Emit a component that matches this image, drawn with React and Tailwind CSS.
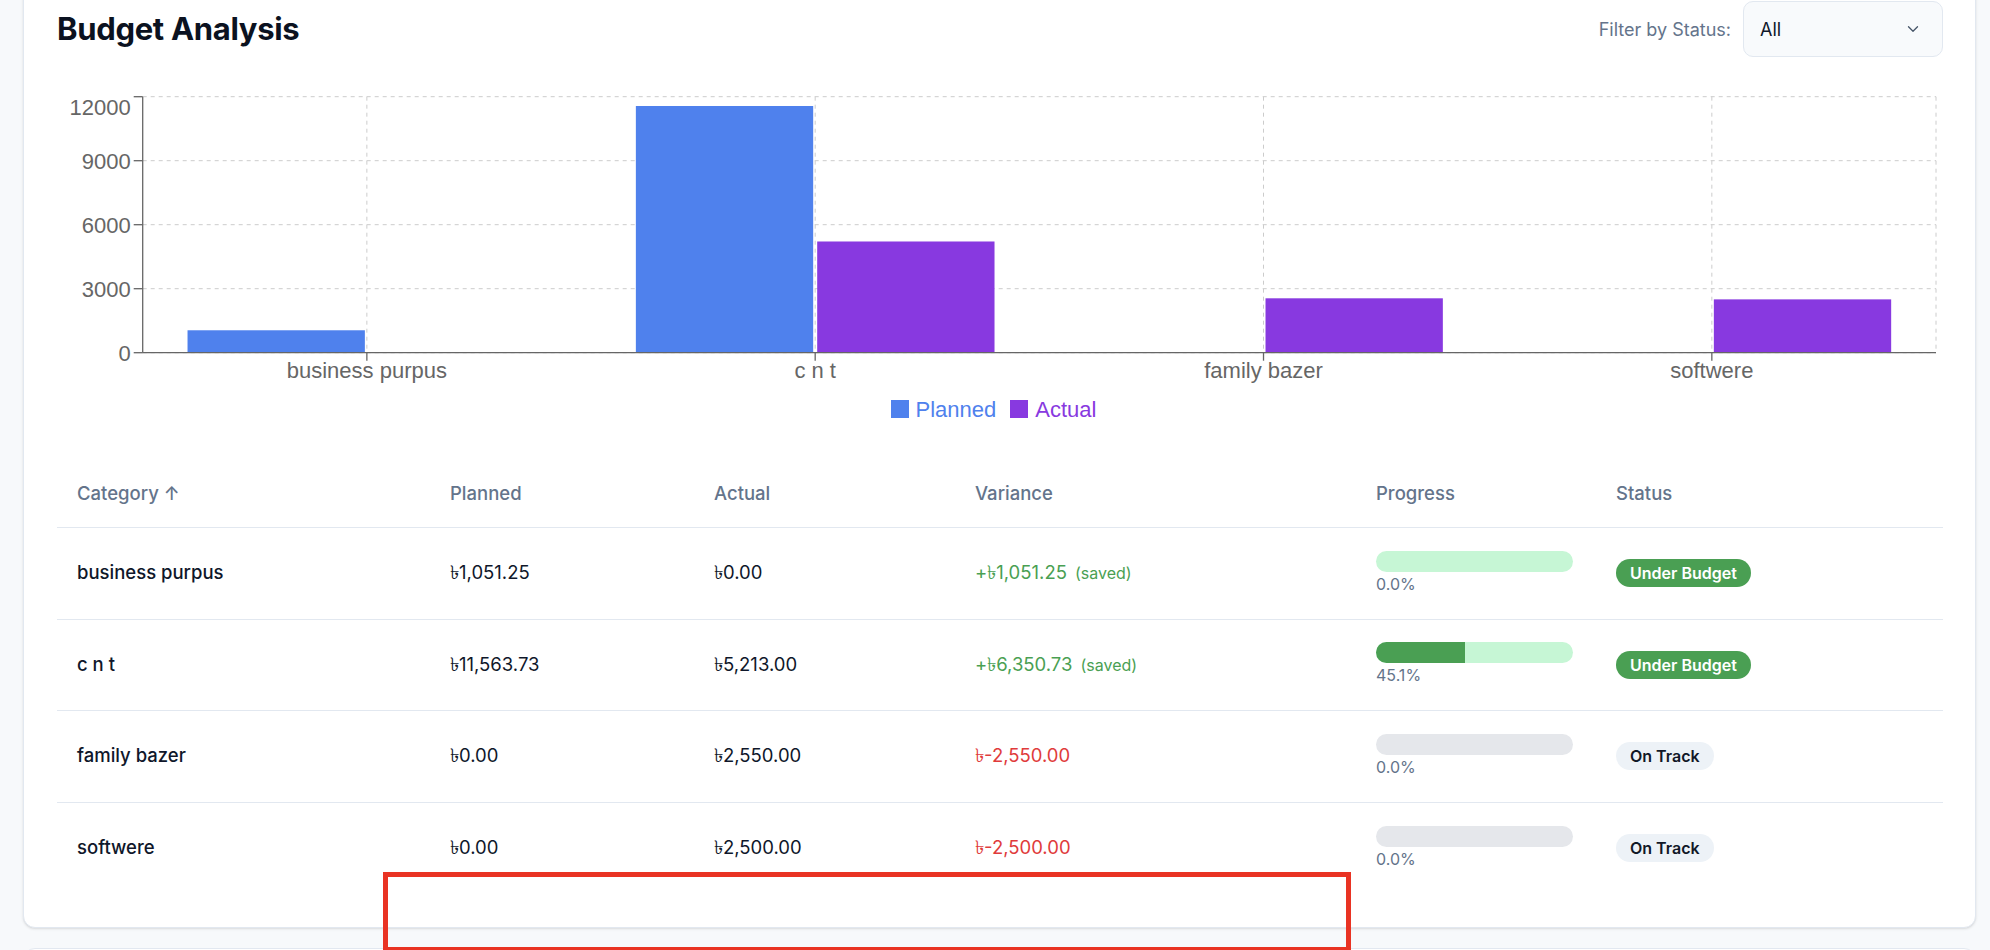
import { ChevronDown } from 'lucide-react'

const rows = [
  { name: 'business purpus', planned: 1051.25, actual: 0, variance: '+৳1,051.25', saved: true, pct: 0, status: 'Under Budget' },
  { name: 'c n t', planned: 11563.73, actual: 5213, variance: '+৳6,350.73', saved: true, pct: 45.1, status: 'Under Budget' },
  { name: 'family bazer', planned: 0, actual: 2550, variance: '৳-2,550.00', saved: false, pct: 0, status: 'On Track' },
  { name: 'softwere', planned: 0, actual: 2500, variance: '৳-2,500.00', saved: false, pct: 0, status: 'On Track' },
]

const fmt = (n) => '৳' + n.toLocaleString('en-US', { minimumFractionDigits: 2, maximumFractionDigits: 2 })

// chart geometry (svg space, origin = card content top-left of chart)
const W = 1886
const H = 305
const axisX = 85.7
const right = 1879
const top = 16.7
const bottom = 272.7
const maxV = 12000
const yOf = (v) => bottom - (v / maxV) * (bottom - top)
const catW = (right - axisX) / 4
const barW = (catW * 0.8 - 4) / 2

function BudgetChart() {
  const ticks = [0, 3000, 6000, 9000, 12000]
  return (
    <svg width={W} height={H} className="block" style={{ fontFamily: '"Liberation Sans", Arial, sans-serif' }}>
      {/* grid */}
      {ticks.map((t) => (
        <line key={t} x1={axisX} x2={right} y1={yOf(t)} y2={yOf(t)} stroke="#ccc" strokeDasharray="4 4" />
      ))}
      {rows.map((r, i) => {
        const cx = axisX + catW * i + catW / 2
        return <line key={r.name} x1={cx} x2={cx} y1={top} y2={bottom} stroke="#ccc" strokeDasharray="4 4" />
      })}
      <line x1={right} x2={right} y1={top} y2={bottom} stroke="#ccc" strokeDasharray="4 4" />

      {/* bars */}
      {rows.map((r, i) => {
        const x0 = axisX + catW * i + catW * 0.1
        return (
          <g key={r.name}>
            {r.planned > 0 && (
              <rect x={x0} y={yOf(r.planned)} width={barW} height={bottom - yOf(r.planned)} fill="#4f81ed" />
            )}
            {r.actual > 0 && (
              <rect x={x0 + barW + 4} y={yOf(r.actual)} width={barW} height={bottom - yOf(r.actual)} fill="#8839e0" />
            )}
          </g>
        )
      })}

      {/* y axis */}
      <line x1={axisX} x2={axisX} y1={top} y2={bottom} stroke="#666" strokeWidth="1.3" />
      {ticks.map((t) => (
        <g key={t}>
          <line x1={axisX - 9} x2={axisX} y1={yOf(t)} y2={yOf(t)} stroke="#666" strokeWidth="1.3" />
          <text x={axisX - 12} y={yOf(t) + (t === maxV ? 10 : 0)} dy="0.355em" textAnchor="end" fontSize="22" fill="#666">
            {t}
          </text>
        </g>
      ))}

      {/* x axis */}
      <line x1={axisX} x2={right} y1={bottom} y2={bottom} stroke="#666" strokeWidth="1.3" />
      {rows.map((r, i) => {
        const cx = axisX + catW * i + catW / 2
        return (
          <g key={r.name}>
            <line x1={cx} x2={cx} y1={bottom} y2={bottom + 8} stroke="#666" strokeWidth="1.3" />
            <text x={cx} y={bottom + 17} dy="0.355em" textAnchor="middle" fontSize="22" fill="#666">
              {r.name}
            </text>
          </g>
        )
      })}
    </svg>
  )
}

function StatusBadge({ status }) {
  if (status === 'Under Budget') {
    return (
      <span className="inline-flex h-[28px] items-center rounded-full bg-[#4a9f53] px-[14px] text-[16px] font-semibold text-white">
        {status}
      </span>
    )
  }
  return (
    <span className="inline-flex h-[28px] items-center rounded-full bg-[#edf2f7] px-[14px] text-[16px] font-semibold text-[#111827]">
      {status}
    </span>
  )
}

export default function App() {
  return (
    <div
      className="relative h-[950px] overflow-hidden bg-[#f7f9fb] pl-[23px] pr-[14px]"
      style={{ fontFamily: 'Inter, "Noto Sans", sans-serif' }}
    >
      {/* CARD */}
      <div className="-mt-8 rounded-xl border border-[#e2e8f0] bg-white pl-[33px] pr-[32px] pt-[32px] pb-[33px] shadow-sm">

        {/* HEADER */}
        <div className="flex h-[56px] items-center justify-between">
          <h2 className="text-[31px] font-bold leading-9 tracking-[-0.01em] text-[#0b1220]">Budget Analysis</h2>
          <div className="flex items-center gap-3">
            <span className="text-[18px] text-[#64748b]">Filter by Status:</span>
            <div className="flex h-[56px] w-[200px] items-center justify-between rounded-[10px] border border-[#e2e8f0] bg-[#f8fafc] pl-4 pr-[20px]">
              <span className="text-[18px] text-[#0f172a]">All</span>
              <ChevronDown size={18} className="text-[#475569]" strokeWidth={1.75} />
            </div>
          </div>
        </div>

        {/* CHART */}
        <div className="mt-[23px]">
          <BudgetChart />
        </div>
        <div
          className="mt-3 flex h-6 items-center justify-center gap-[14px] pr-[13px] text-[22px]"
          style={{ fontFamily: '"Liberation Sans", Arial, sans-serif' }}
        >
          <div className="flex items-center gap-[7px] text-[#4f81ed]">
            <span className="h-[18px] w-[18px] bg-[#4f81ed]" />
            Planned
          </div>
          <div className="flex items-center gap-[7px] text-[#8839e0]">
            <span className="h-[18px] w-[18px] bg-[#8839e0]" />
            Actual
          </div>
        </div>

        {/* TABLE */}
        <div className="mt-10">
          <div className="grid h-[67px] grid-cols-[373px_264px_261px_401px_240px_1fr] items-center border-b border-[#e2e8f0] text-[18.5px] font-medium text-[#64748b]">
            <div className="pl-5">Category ↑</div>
            <div className="pl-5">Planned</div>
            <div className="pl-5">Actual</div>
            <div className="pl-5">Variance</div>
            <div className="pl-5">Progress</div>
            <div className="pl-5">Status</div>
          </div>

          {rows.map((r, i) => (
            <div
              key={r.name}
              className={
                i < rows.length - 1
                  ? 'grid h-[91.5px] grid-cols-[373px_264px_261px_401px_240px_1fr] items-center border-b border-[#e2e8f0] text-[18.5px] text-[#0f172a]'
                  : 'grid h-[91.5px] grid-cols-[373px_264px_261px_401px_240px_1fr] items-center text-[18.5px] text-[#0f172a]'
              }
            >
              <div className="pl-5 font-medium">{r.name}</div>
              <div className="pl-5">{fmt(r.planned)}</div>
              <div className="pl-5">{fmt(r.actual)}</div>
              <div className="pl-5">
                {r.saved ? (
                  <span className="text-[#4a9f53]">
                    {r.variance}
                    <span className="ml-2 text-[16px]">(saved)</span>
                  </span>
                ) : (
                  <span className="text-[#e03b3b]">{r.variance}</span>
                )}
              </div>
              <div className="pl-5">
                <div className={r.saved ? 'h-[21px] w-[197px] overflow-hidden rounded-full bg-[#c6f6d5]' : 'h-[21px] w-[197px] overflow-hidden rounded-full bg-[#e5e7eb]'}>
                  <div className="h-full bg-[#4a9f53]" style={{ width: `${r.pct}%` }} />
                </div>
                <div className="text-[16px] leading-6 text-[#64748b]">{r.pct.toFixed(1)}%</div>
              </div>
              <div className="pl-5">
                <StatusBadge status={r.status} />
              </div>
            </div>
          ))}
        </div>
      </div>

      {/* next card peeking at the bottom */}
      <div className="mt-5 h-[120px] rounded-xl border border-[#e2e8f0] bg-white" />

      {/* annotation box */}
      <div className="absolute left-[383px] top-[872px] h-[80px] w-[968px] border-[5px] border-[#e93323]" />
    </div>
  )
}
